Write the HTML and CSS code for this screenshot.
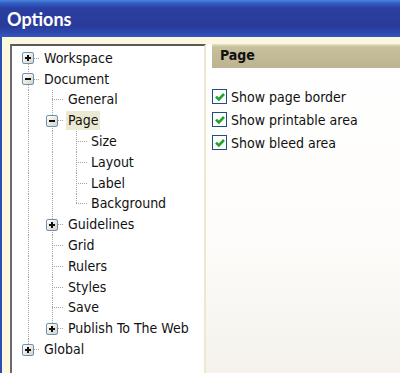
FILE: index.html
```html
<!DOCTYPE html>
<html>
<head>
<meta charset="utf-8">
<link rel="stylesheet" href="styles.css">
</head>
<body>
<div class="window">
  <div class="titlebar">Options</div>
  <div class="client">
    <div class="tree">
      <div class="row"><span class="cell first"><span class="exp plus"></span></span><span class="label">Workspace</span></div>
      <div class="row"><span class="cell tee"><span class="exp minus"></span></span><span class="label">Document</span></div>
      <div class="row"><span class="cell pipe"></span><span class="cell tee"></span><span class="label">General</span></div>
      <div class="row"><span class="cell pipe"></span><span class="cell tee"><span class="exp minus"></span></span><span class="label selected">Page</span></div>
      <div class="row"><span class="cell pipe"></span><span class="cell pipe"></span><span class="cell tee"></span><span class="label l2">Size</span></div>
      <div class="row"><span class="cell pipe"></span><span class="cell pipe"></span><span class="cell tee"></span><span class="label l2">Layout</span></div>
      <div class="row"><span class="cell pipe"></span><span class="cell pipe"></span><span class="cell tee"></span><span class="label l2">Label</span></div>
      <div class="row"><span class="cell pipe"></span><span class="cell pipe"></span><span class="cell elbow"></span><span class="label l2">Background</span></div>
      <div class="row"><span class="cell pipe"></span><span class="cell tee"><span class="exp plus"></span></span><span class="label">Guidelines</span></div>
      <div class="row"><span class="cell pipe"></span><span class="cell tee"></span><span class="label">Grid</span></div>
      <div class="row"><span class="cell pipe"></span><span class="cell tee"></span><span class="label">Rulers</span></div>
      <div class="row"><span class="cell pipe"></span><span class="cell tee"></span><span class="label">Styles</span></div>
      <div class="row"><span class="cell pipe"></span><span class="cell tee"></span><span class="label">Save</span></div>
      <div class="row"><span class="cell pipe"></span><span class="cell elbow"><span class="exp plus"></span></span><span class="label">Publish To The Web</span></div>
      <div class="row"><span class="cell elbow"><span class="exp plus"></span></span><span class="label">Global</span></div>
    </div>
    <div class="panel">
      <div class="panel-head">Page</div>
      <div class="options">
        <label class="opt"><span class="check"><svg width="12" height="12" viewBox="0 0 12 12"><path d="M2 5.6 L4.8 8.4 L10 3" fill="none" stroke="#21a32a" stroke-width="2.6"/></svg></span>Show page border</label>
        <label class="opt"><span class="check"><svg width="12" height="12" viewBox="0 0 12 12"><path d="M2 5.6 L4.8 8.4 L10 3" fill="none" stroke="#21a32a" stroke-width="2.6"/></svg></span>Show printable area</label>
        <label class="opt"><span class="check"><svg width="12" height="12" viewBox="0 0 12 12"><path d="M2 5.6 L4.8 8.4 L10 3" fill="none" stroke="#21a32a" stroke-width="2.6"/></svg></span>Show bleed area</label>
      </div>
    </div>
  </div>
</div>
</body>
</html>
```

FILE: styles.css
```css
html, body {
  margin: 0;
  padding: 0;
}
body {
  width: 400px;
  height: 373px;
  overflow: hidden;
  font-family: "DejaVu Sans Condensed", "DejaVu Sans", sans-serif;
  color: #111;
}
.window {
  display: flex;
  flex-direction: column;
  height: 373px;
}
.titlebar {
  height: 37px;
  box-sizing: border-box;
  padding: 8px 0 0 7px;
  font-family: Lato, "DejaVu Sans Condensed", sans-serif;
  font-weight: bold;
  font-size: 18px;
  color: #fff;
  background: linear-gradient(to bottom, #4a86dc 0px, #3460c8 3px, #2a3fa2 8px, #2a3a9a 26px, #2c48ae 32px, #3556c0 37px);
}
.client {
  flex: 1;
  display: flex;
  background: #fcf8df;
  border-left: 2px solid #2c4cb8;
  padding: 7px 0 0 8px;
  min-height: 0;
}
.tree {
  width: 188px;
  background: #fff;
  border-top: 2px solid #5a5a5a;
  border-left: 2px solid #6a6a6a;
  border-right: 2px solid #ede8cf;
  padding: 2px 0 0 4px;
  font-size: 14px;
}
.row {
  display: flex;
  align-items: center;
  height: 20.8px;
}
.cell {
  width: 24px;
  height: 100%;
  flex: none;
  display: flex;
  align-items: center;
  justify-content: center;
  --dot: repeating-linear-gradient(to bottom, #a4a4a4 0 1px, transparent 1px 2px);
  --hdot: repeating-linear-gradient(to right, #a4a4a4 0 1px, transparent 1px 2px);
}
.pipe {
  background: var(--dot) no-repeat 50% 0 / 1px 100%;
}
.tee {
  background: var(--dot) no-repeat 50% 0 / 1px 100%, var(--hdot) no-repeat 100% 50% / 12px 1px;
}
.elbow {
  background: var(--dot) no-repeat 50% 0 / 1px 50%, var(--hdot) no-repeat 100% 50% / 12px 1px;
}
.first {
  background: var(--dot) no-repeat 50% 100% / 1px 50%, var(--hdot) no-repeat 100% 50% / 12px 1px;
}
.exp {
  width: 10px;
  height: 10px;
  border: 1px solid #6f8fb0;
  border-radius: 2px;
  background: linear-gradient(135deg, #ffffff, #d6d3c4);
  display: flex;
  align-items: center;
  justify-content: center;
  box-sizing: content-box;
}
.exp::before {
  content: "";
  width: 6px;
  height: 2px;
  background: #111;
}
.plus {
  background-image: linear-gradient(#111, #111), linear-gradient(135deg, #ffffff, #d6d3c4);
  background-size: 2px 6px, 100% 100%;
  background-position: center, 0 0;
  background-repeat: no-repeat;
}
.label {
  margin-left: 2px;
  padding: 0 2px;
  line-height: 19px;
  white-space: nowrap;
}
.label.l2 {
  margin-left: 1px;
}
.selected {
  background: #ece9d3;
}
.panel {
  flex: 1;
  background: linear-gradient(to bottom, #ffffff 0%, #fdfcfa 60%, #f5f2ec 100%);
  padding-left: 6px;
}
.panel-head {
  height: 24px;
  box-sizing: border-box;
  padding: 3px 0 0 8px;
  font-weight: bold;
  font-size: 14px;
  background: linear-gradient(to bottom, #e8e4cc 0, #c7c09c 3px, #bcb490 100%);
}
.options {
  padding: 20px 0 0 0;
  display: flex;
  flex-direction: column;
  gap: 6px;
}
.opt {
  display: flex;
  align-items: center;
  font-size: 14px;
  height: 17px;
}
.check {
  width: 15px;
  height: 15px;
  box-sizing: border-box;
  border: 1.5px solid #1d4f85;
  background: #fff;
  display: flex;
  align-items: center;
  justify-content: center;
  margin-right: 4px;
}
```
